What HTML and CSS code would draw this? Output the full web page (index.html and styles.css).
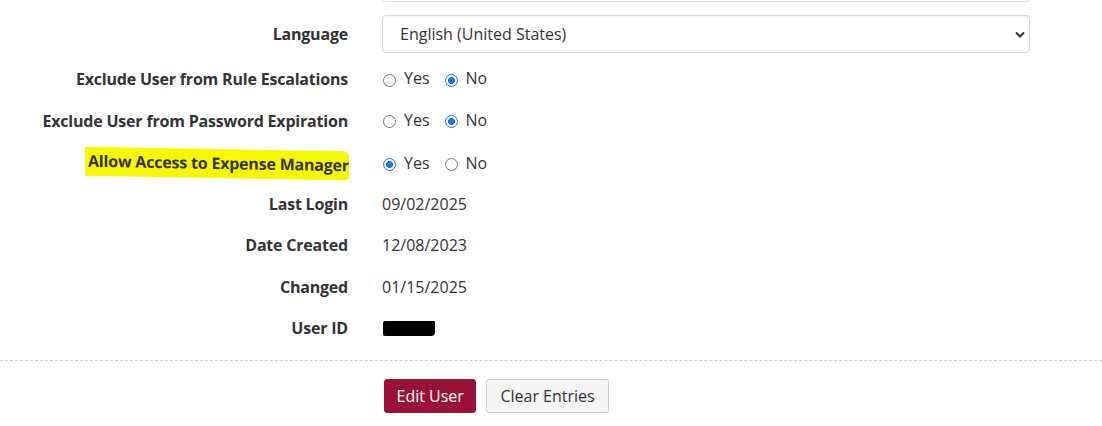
FILE: index.html
```html
<!DOCTYPE html>
<html>
<head>
<meta charset="utf-8">
<link rel="stylesheet" href="styles.css">
</head>
<body>
<div class="page">
  <div class="form">
    <div class="row row-top">
      <div class="label"></div>
      <div class="value"><div class="input"></div></div>
    </div>
    <div class="row row-select">
      <div class="label">Language</div>
      <div class="value">
        <div class="select">
          <span>English (United States)</span>
          <svg class="chev" width="10" height="7" viewBox="0 0 10 7"><path d="M1 1.5 L5 5.5 L9 1.5" fill="none" stroke="#333" stroke-width="2"/></svg>
        </div>
      </div>
    </div>
    <div class="row">
      <div class="label">Exclude User from Rule Escalations</div>
      <div class="value radios">
        <span class="radio"></span><span class="opt">Yes</span>
        <span class="radio checked"></span><span class="opt">No</span>
      </div>
    </div>
    <div class="row">
      <div class="label">Exclude User from Password Expiration</div>
      <div class="value radios">
        <span class="radio"></span><span class="opt">Yes</span>
        <span class="radio checked"></span><span class="opt">No</span>
      </div>
    </div>
    <div class="row">
      <div class="label"><span class="hl">Allow Access to Expense Manager</span></div>
      <div class="value radios">
        <span class="radio checked"></span><span class="opt">Yes</span>
        <span class="radio"></span><span class="opt">No</span>
      </div>
    </div>
    <div class="row">
      <div class="label">Last Login</div>
      <div class="value">09/02/2025</div>
    </div>
    <div class="row">
      <div class="label">Date Created</div>
      <div class="value">12/08/2023</div>
    </div>
    <div class="row">
      <div class="label">Changed</div>
      <div class="value">01/15/2025</div>
    </div>
    <div class="row">
      <div class="label">User ID</div>
      <div class="value"><span class="redact"></span></div>
    </div>
  </div>
  <div class="divider"></div>
  <div class="actions">
    <button class="btn btn-primary">Edit User</button>
    <button class="btn btn-default">Clear Entries</button>
  </div>
</div>
</body>
</html>
```

FILE: styles.css
```css
html, body {
  margin: 0;
  padding: 0;
  background: #fff;
  overflow: hidden;
}
body {
  font-family: "Open Sans", "Liberation Sans", sans-serif;
  font-size: 16px;
  color: #333;
}
.page {
  width: 1102px;
}
.form {
  margin-top: -36px;
}
.row {
  display: grid;
  grid-template-columns: 348px 648px;
  column-gap: 34px;
  align-items: center;
  height: 26px;
  margin-bottom: 15.5px;
}
.row-top, .row-select {
  height: 38px;
  margin-bottom: 13px;
}
.label {
  text-align: right;
  font-weight: 700;
  white-space: nowrap;
  letter-spacing: -0.2px;
}
.hl {
  background: #f7f700;
  padding: 5px 0 6px 3px;
  margin-right: -1px;
  border-radius: 2px 6px 3px 1px;
  transform: skewY(1deg);
  display: inline-block;
  line-height: 18px;
}
.value {
  white-space: nowrap;
}
.input {
  height: 36px;
  border: 1px solid #ddd;
  border-radius: 4px;
}
.select {
  height: 36px;
  border: 1px solid #d6d6d6;
  border-radius: 4px;
  display: flex;
  align-items: center;
  justify-content: space-between;
  padding: 0 4px 0 17px;
  box-shadow: inset 0 1px 1px rgba(0,0,0,0.04);
}
.chev {
  display: block;
}
.radios {
  display: flex;
  align-items: center;
  padding-left: 1px;
}
.radio {
  width: 13px;
  height: 13px;
  border: 1px solid #767676;
  border-radius: 50%;
  box-sizing: border-box;
  display: inline-block;
  margin-right: 8px;
  position: relative;
  top: 1px;
}
.radio.checked {
  border: 1px solid #1a73e8;
  background: radial-gradient(circle, #1a73e8 0, #1a73e8 3.2px, #fff 3.8px);
}
.opt {
  margin-right: 15px;
  position: relative;
  top: -1px;
}
.redact {
  display: block;
  width: 52px;
  height: 15px;
  background: #000;
  border-radius: 2px 1px 4px 2px;
  margin-left: 1px;
}
.divider {
  border-top: 1px dashed #ccc;
  margin-top: 18.5px;
}
.actions {
  display: flex;
  gap: 10px;
  padding-left: 384px;
  margin-top: 18px;
}
.btn {
  font-family: "Open Sans", "Liberation Sans", sans-serif;
  font-size: 16px;
  height: 34px;
  padding: 0 13px;
  border-radius: 3px;
  border: 1px solid transparent;
  cursor: pointer;
}
.btn-primary {
  background: #9a1238;
  color: #fff;
  border-color: #9a1238;
  padding: 0 11.5px;
}
.btn-default {
  background: #f5f5f5;
  color: #333;
  border-color: #ccc;
}
```
